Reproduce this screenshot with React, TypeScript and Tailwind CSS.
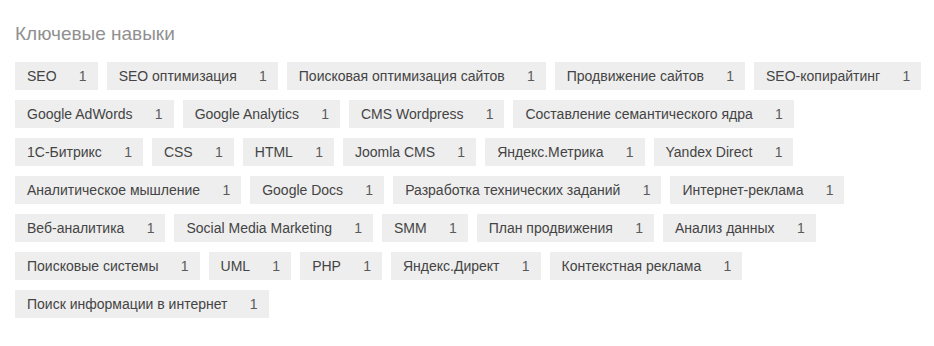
const skills = [
  "SEO",
  "SEO оптимизация",
  "Поисковая оптимизация сайтов",
  "Продвижение сайтов",
  "SEO-копирайтинг",
  "Google AdWords",
  "Google Analytics",
  "CMS Wordpress",
  "Составление семантического ядра",
  "1С-Битрикс",
  "CSS",
  "HTML",
  "Joomla CMS",
  "Яндекс.Метрика",
  "Yandex Direct",
  "Аналитическое мышление",
  "Google Docs",
  "Разработка технических заданий",
  "Интернет-реклама",
  "Веб-аналитика",
  "Social Media Marketing",
  "SMM",
  "План продвижения",
  "Анализ данных",
  "Поисковые системы",
  "UML",
  "PHP",
  "Яндекс.Директ",
  "Контекстная реклама",
  "Поиск информации в интернет",
];

export default function App() {
  return (
    <div className="h-[346px] w-[934px] bg-white pl-[15px] pr-[8px] pt-[22px] font-['Liberation_Sans',Arial,sans-serif]">
      <h2 className="text-[19px] leading-[24px] text-[#909090]">Ключевые навыки</h2>

      <div className="mt-[16px] flex flex-wrap gap-x-[9px] gap-y-[10px]">
        {skills.map((s, i) => (
          <div
            key={i}
            className="flex h-[28px] items-center bg-[#eeeeee] pl-[12px] pr-[11px] text-[14px] text-[#444]"
          >
            <span>{s}</span>
            <span className="ml-[22.25px] text-[#5a5a5a]">1</span>
          </div>
        ))}
      </div>
    </div>
  );
}
